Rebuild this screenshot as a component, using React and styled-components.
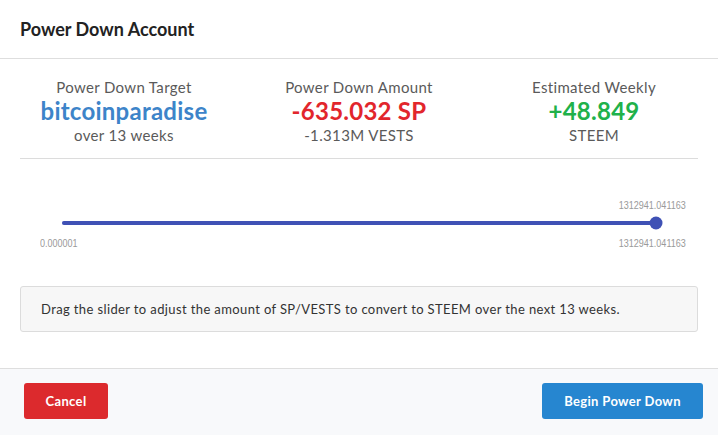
import React from 'react';
import styled, { createGlobalStyle } from 'styled-components';

const GlobalStyle = createGlobalStyle`
    html, body {
        margin: 0;
        padding: 0;
        background: #ffffff;
    }
    body {
        font-family: Lato, 'Open Sans', sans-serif;
        color: #333;
    }
`;

const stats = [
    { label: 'Power Down Target', value: 'bitcoinparadise', sub: 'over 13 weeks', tone: 'blue' },
    { label: 'Power Down Amount', value: '-635.032 SP', sub: '-1.313M VESTS', tone: 'red' },
    { label: 'Estimated Weekly', value: '+48.849', sub: 'STEEM', tone: 'green' },
];

const tones = {
    blue: '#3d84c9',
    red: '#e2262c',
    green: '#20b14a',
};

function App() {
    const min = 0.000001;
    const max = 1312941.041163;
    const current = 1312941.041163;
    const pct = ((current - min) / (max - min)) * 100;

    return (
        <Modal>
            <GlobalStyle />
            <Header>
                <Title>Power Down Account</Title>
            </Header>

            <Stats>
                {stats.map((s) => (
                    <Stat key={s.label}>
                        <StatLabel>{s.label}</StatLabel>
                        <StatValue tone={s.tone}>{s.value}</StatValue>
                        <StatSub>{s.sub}</StatSub>
                    </Stat>
                ))}
            </Stats>

            <SliderBlock>
                <LabelRow align='flex-end'>
                    <SliderLabel side='right'>{current.toFixed(6)}</SliderLabel>
                </LabelRow>
                <TrackRow>
                    <Track>
                        <Fill style={{ width: pct + '%' }} />
                        <Thumb style={{ left: pct + '%' }} />
                    </Track>
                </TrackRow>
                <LabelRow align='space-between'>
                    <SliderLabel side='left'>{min.toFixed(6)}</SliderLabel>
                    <SliderLabel side='right'>{max.toFixed(6)}</SliderLabel>
                </LabelRow>
            </SliderBlock>

            <InfoBox>
                Drag the slider to adjust the amount of SP/VESTS to convert to STEEM over the next 13 weeks.
            </InfoBox>

            <Footer>
                <Button kind='danger'>Cancel</Button>
                <Button kind='primary'>Begin Power Down</Button>
            </Footer>
        </Modal>
    );
}

export default App;

const Modal = styled.div`
    width: 718px;
    height: 435px;
    background: #fff;
    display: flex;
    flex-direction: column;
    overflow: hidden;
`;

const Header = styled.div`
    height: 59px;
    box-sizing: border-box;
    display: flex;
    align-items: center;
    padding: 0 20px;
    border-bottom: 1px solid #dedede;
`;

const Title = styled.h2`
    margin: 0;
    font-size: 18px;
    font-weight: 700;
    color: #222;
    line-height: 24px;
`;

const Stats = styled.div`
    display: grid;
    grid-template-columns: 208px 1fr 208px;
    margin: 0 20px;
    padding: 18px 0 13px;
    border-bottom: 1px solid #dcdcdc;
    letter-spacing: 0.35px;
`;

const Stat = styled.div`
    text-align: center;
    display: flex;
    flex-direction: column;
    align-items: center;
`;

const StatLabel = styled.div`
    font-size: 15px;
    line-height: 20px;
    color: #5a5a5a;
`;

const StatValue = styled.div`
    font-size: 24px;
    font-weight: 700;
    line-height: 28px;
    letter-spacing: 0.25px;
    color: ${(p) => tones[p.tone]};
`;

const StatSub = styled.div`
    font-size: 15px;
    line-height: 20px;
    color: #5a5a5a;
`;

const SliderBlock = styled.div`
    padding: 39px 32px 0 40px;
    height: 127px;
    box-sizing: border-box;
`;

const LabelRow = styled.div`
    display: flex;
    justify-content: ${(p) => p.align};
    height: 14px;
    align-items: center;
`;

const SliderLabel = styled.span`
    display: inline-block;
    font-family: 'Liberation Sans', Arial, sans-serif;
    font-size: 11px;
    color: #9a9a9a;
    line-height: 14px;
    transform: scaleX(0.82);
    transform-origin: ${(p) => p.side} center;
`;

const TrackRow = styled.div`
    height: 14px;
    margin: 4px 30px 6px 22px;
    display: flex;
    align-items: center;
`;

const Track = styled.div`
    position: relative;
    flex: 1;
    height: 4px;
    border-radius: 2px;
    background: #c5cae9;
`;

const Fill = styled.div`
    height: 100%;
    border-radius: 2px;
    background: #3f51b5;
`;

const Thumb = styled.div`
    position: absolute;
    top: 50%;
    width: 13px;
    height: 13px;
    border-radius: 50%;
    background: #3f51b5;
    transform: translate(-50%, -50%);
`;

const InfoBox = styled.div`
    margin: 0 20px;
    height: 46px;
    box-sizing: border-box;
    display: flex;
    align-items: center;
    padding: 0 20px;
    background: #f7f7f7;
    border: 1px solid #dcdcdc;
    border-radius: 3px;
    font-size: 13px;
    letter-spacing: 0.38px;
    color: #333;
`;

const Footer = styled.div`
    margin-top: 36px;
    flex: 1;
    border-top: 1px solid #dedede;
    background: #f8f9fb;
    display: flex;
    justify-content: space-between;
    align-items: flex-start;
    padding: 14px 15px 0 24px;
`;

const Button = styled.button`
    height: 36px;
    border: none;
    border-radius: 3px;
    font-family: Lato, sans-serif;
    font-size: 13px;
    font-weight: 700;
    letter-spacing: 0.35px;
    color: #fff;
    cursor: pointer;
    padding: 0 20px;
    background: ${(p) => (p.kind === 'danger' ? '#dc2a2d' : '#2686d0')};
    min-width: ${(p) => (p.kind === 'danger' ? '84px' : '161px')};
`;
